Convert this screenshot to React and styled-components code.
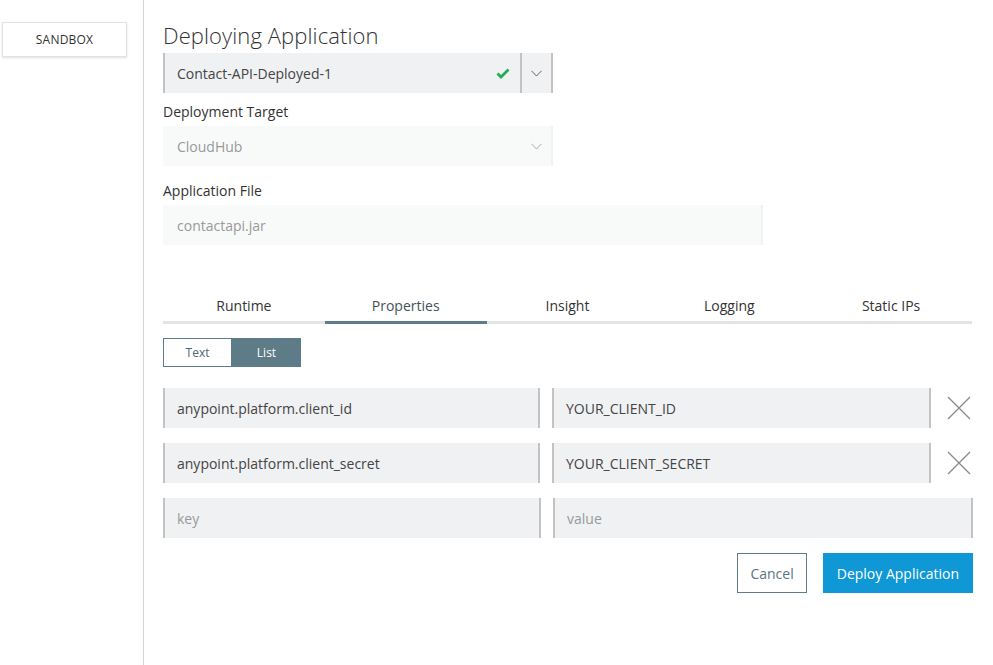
import React, { useState } from 'react'
import styled, { createGlobalStyle } from 'styled-components'

const GlobalStyle = createGlobalStyle`
  html, body {
    margin: 0;
    padding: 0;
    background: #fff;
  }
  body {
    font-family: "Open Sans", "Liberation Sans", sans-serif;
    color: #333;
  }
`

const slate = '#5e7b88'

const Page = styled.div`
  display: flex;
  min-height: 665px;
`

const Sidebar = styled.aside`
  width: 144px;
  padding: 22px 0 0 2px;
  box-sizing: border-box;
  border-right: 1px solid #d4d4d4;
  flex-shrink: 0;
`

const EnvButton = styled.button`
  width: 125px;
  height: 35px;
  background: #fff;
  border: 1px solid #e2e2e2;
  box-shadow: 0 1px 2px rgba(0, 0, 0, 0.12);
  font-family: inherit;
  font-size: 12px;
  color: #333;
  letter-spacing: 0.2px;
`

const Main = styled.main`
  width: 810px;
  padding: 20px 0 0 19px;
  display: flex;
  flex-direction: column;
`

const Title = styled.h1`
  margin: 1px 0 3px;
  font-size: 22px;
  font-weight: 300;
  color: #333;
  line-height: 29px;
  letter-spacing: 0.1px;
`

const Label = styled.div`
  font-size: 14px;
  color: #333;
  margin: ${p => p.$top || 0}px 0 5px;
  line-height: 19px;
`

const Field = styled.div`
  width: ${p => p.$width}px;
  height: 40px;
  box-sizing: border-box;
  display: flex;
  align-items: center;
  background: ${p => (p.$disabled ? '#f8f9f9' : '#f0f1f3')};
  border-left: 2px solid ${p => (p.$disabled ? '#f8f9f9' : '#c3c3c3')};
  border-right: 2px solid ${p => (p.$disabled ? '#f1f2f2' : '#c3c3c3')};
  font-size: 14px;
  color: ${p => (p.$muted ? '#999' : '#444')};
`

const FieldText = styled.span`
  flex: 1;
  padding-left: 12px;
  white-space: nowrap;
`

const Check = styled.span`
  display: flex;
  align-items: center;
  padding-right: 10px;
`

const Caret = styled.span`
  width: 29px;
  height: 100%;
  display: flex;
  align-items: center;
  justify-content: center;
  border-left: 2px solid ${p => (p.$disabled ? 'transparent' : '#c3c3c3')};
`

const Tabs = styled.div`
  display: flex;
  margin-top: 49px;
  width: 809px;
`

const Tab = styled.div`
  flex: 1;
  text-align: center;
  font-size: 14px;
  color: ${p => (p.$active ? '#44525a' : '#333')};
  padding: 2px 0 6px;
  border-bottom: 3px solid ${p => (p.$active ? slate : '#e4e4e4')};
  line-height: 19px;
`

const Toggle = styled.div`
  display: flex;
  margin-top: 14px;
`

const ToggleButton = styled.button`
  width: 69px;
  height: 29px;
  font-family: inherit;
  font-size: 12px;
  border: 1px solid ${slate};
  background: ${p => (p.$on ? slate : '#fff')};
  color: ${p => (p.$on ? '#fff' : '#4d6470')};
  padding: 0;
`

const Rows = styled.div`
  display: flex;
  flex-direction: column;
  gap: 15px;
  margin-top: 21px;
`

const Row = styled.div`
  display: flex;
  align-items: center;
  gap: 12px;
`

const Remove = styled.button`
  width: 28px;
  height: 28px;
  margin-left: 2px;
  border: 0;
  background: none;
  padding: 0;
  display: flex;
  align-items: center;
  justify-content: center;
`

const Actions = styled.div`
  display: flex;
  justify-content: flex-end;
  gap: 16px;
  margin-top: 15px;
  width: 810px;
`

const Button = styled.button`
  height: 40px;
  padding: 0 ${p => (p.$primary ? 13 : 12)}px;
  font-family: inherit;
  font-size: 14px;
  border: 1px solid ${p => (p.$primary ? '#0f98d5' : slate)};
  background: ${p => (p.$primary ? '#0f98d5' : '#fff')};
  color: ${p => (p.$primary ? '#fff' : '#5a7682')};
`

const Chevron = ({ color = '#666' }) => (
  <svg width="11" height="7" viewBox="0 0 11 7">
    <path d="M0.5 0.8 L5.5 6 L10.5 0.8" fill="none" stroke={color} strokeWidth="1" />
  </svg>
)

const Cross = () => (
  <svg width="24" height="24" viewBox="0 0 24 24">
    <path d="M1 1 L23 23 M23 1 L1 23" stroke="#8a8a8a" strokeWidth="1.3" />
  </svg>
)

const properties = [
  { key: 'anypoint.platform.client_id', value: 'YOUR_CLIENT_ID' },
  { key: 'anypoint.platform.client_secret', value: 'YOUR_CLIENT_SECRET' },
]

const tabs = ['Runtime', 'Properties', 'Insight', 'Logging', 'Static IPs']

export default function App() {
  const [mode, setMode] = useState('list')

  return (
    <>
      <GlobalStyle />
      <Page>
        <Sidebar>
          <EnvButton>SANDBOX</EnvButton>
        </Sidebar>
        <Main>
          <Title>Deploying Application</Title>
          <Field $width={390}>
            <FieldText>Contact-API-Deployed-1</FieldText>
            <Check>
              <svg width="14" height="11" viewBox="0 0 14 11">
                <path d="M1.5 5.5 L5 9 L12.5 1.5" fill="none" stroke="#1fae55" strokeWidth="2.8" />
              </svg>
            </Check>
            <Caret>
              <Chevron />
            </Caret>
          </Field>

          <Label $top={9}>Deployment Target</Label>
          <Field $width={390} $disabled $muted>
            <FieldText>CloudHub</FieldText>
            <Caret $disabled>
              <Chevron color="#aaa" />
            </Caret>
          </Field>

          <Label $top={15}>Application File</Label>
          <Field $width={600} $disabled $muted>
            <FieldText>contactapi.jar</FieldText>
          </Field>

          <Tabs>
            {tabs.map(t => (
              <Tab key={t} $active={t === 'Properties'}>{t}</Tab>
            ))}
          </Tabs>

          <Toggle>
            <ToggleButton $on={mode === 'text'} onClick={() => setMode('text')}>Text</ToggleButton>
            <ToggleButton $on={mode === 'list'} onClick={() => setMode('list')}>List</ToggleButton>
          </Toggle>

          <Rows>
            {properties.map(p => (
              <Row key={p.key}>
                <Field $width={378}>
                  <FieldText>{p.key}</FieldText>
                </Field>
                <Field $width={380}>
                  <FieldText>{p.value}</FieldText>
                </Field>
                <Remove>
                  <Cross />
                </Remove>
              </Row>
            ))}
            <Row>
              <Field $width={378} $muted>
                <FieldText>key</FieldText>
              </Field>
              <Field $width={420} $muted>
                <FieldText>value</FieldText>
              </Field>
            </Row>
          </Rows>

          <Actions>
            <Button>Cancel</Button>
            <Button $primary>Deploy Application</Button>
          </Actions>
        </Main>
      </Page>
    </>
  )
}
